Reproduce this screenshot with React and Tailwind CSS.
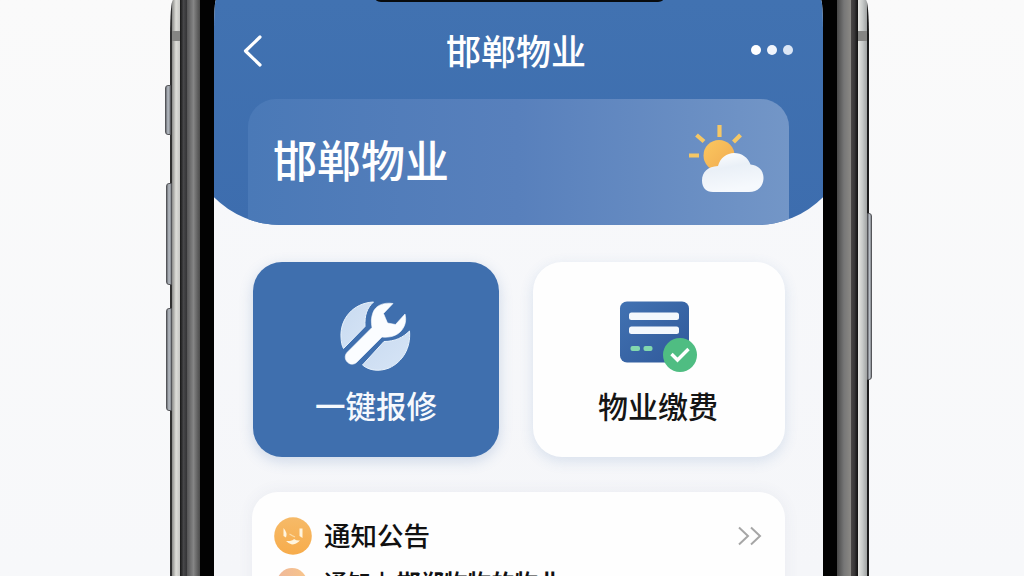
const cjk = "font-['Noto_Sans_CJK_SC','Noto_Sans',sans-serif]";

function WeatherIcon() {
  return (
    <svg className="-mr-px mt-[25px] h-[72px] w-[80px] shrink-0" viewBox="0 0 80 72">
      <defs>
        <linearGradient id="sun" x1="0" y1="0" x2="1" y2="1">
          <stop offset="0" stopColor="#fbc75f" />
          <stop offset="1" stopColor="#f0aa50" />
        </linearGradient>
        <linearGradient id="cloud" x1="0" y1="0" x2="0.3" y2="1">
          <stop offset="0" stopColor="#ffffff" />
          <stop offset="0.45" stopColor="#eaf0f7" />
          <stop offset="1" stopColor="#f6f9fd" />
        </linearGradient>
      </defs>
      <g stroke="#f5c765" strokeWidth="4.2">
        <path d="M34.500 1V13M4 31.500H14M11.500 11L19 17.500M55.500 11L48.500 18" />
      </g>
      <circle cx="34" cy="31.500" r="15.500" fill="url(#sun)" />
      <path
        d="M28 68C21 68 17 63.500 17 56.500C17 48 23 42.500 33 42C35 34 42 29 49 29C57 29 63 33.500 65.500 40.500C73 41 78.500 46 78.500 54C78.500 62 73 68 64 68Z"
        fill="url(#cloud)"
      />
    </svg>
  );
}

function RepairIcon() {
  return (
    <svg className="h-[74px] w-[74px]" viewBox="0 0 74 74">
      <defs>
        <linearGradient id="disc" x1="0" y1="0" x2="1" y2="1">
          <stop offset="0" stopColor="#c8daf0" />
          <stop offset="1" stopColor="#d7e5f6" />
        </linearGradient>
      </defs>
      <g fill="url(#disc)" stroke="#e8f2fc" strokeWidth="1">
        <path d="M34.500 3C14 4 1 20 2 38C2.200 43 3 47 4.500 49.500L26 27.500C25.500 16 28 9 34.500 3Z" />
        <path d="M70.500 32C64 38.500 56 42.500 45 42.500L23.500 66C30 71.500 40 73 50 69C63.500 63 72 49 70.500 32Z" />
      </g>
      <path
        d="M54 4.500C44.500 3 36.500 6.500 34 13.500C32 19 32 23 33 28.500L8 53.500C2.500 60 11 69 17.500 63.500L43 38C51 39 58.500 36.500 62.500 31.500C66.500 26.500 67.500 21 66 15L56.500 25.500L48.500 24L44.500 14.500Z"
        fill="#fbfdff"
        stroke="#fbfdff"
        strokeWidth="0.6"
        strokeLinejoin="round"
      />
    </svg>
  );
}

function PaymentIcon() {
  return (
    <svg className="h-[74px] w-[80px]" viewBox="0 0 80 74">
      <defs>
        <linearGradient id="bill" x1="0" y1="0" x2="1" y2="1">
          <stop offset="0" stopColor="#4172b2" />
          <stop offset="1" stopColor="#30599a" />
        </linearGradient>
      </defs>
      <rect x="1" y="2.500" width="69" height="61" rx="7" fill="url(#bill)" />
      <rect x="10" y="13.500" width="50" height="7.500" rx="2.500" fill="#f3f8fd" />
      <rect x="10" y="27.500" width="50" height="7.500" rx="2.500" fill="#f3f8fd" />
      <rect x="11.500" y="47" width="9.500" height="5" rx="2" fill="#82d8ae" />
      <rect x="24.500" y="47" width="9" height="5" rx="2" fill="#82d8ae" />
      <circle cx="61" cy="56" r="17" fill="#4fbd82" />
      <path d="M52.500 55L58.500 61L69.500 50" fill="none" stroke="#fff" strokeWidth="3.400" />
    </svg>
  );
}

function FaceIcon() {
  return (
    <svg className="h-[38px] w-[38px] shrink-0" viewBox="0 0 38 38">
      <defs>
        <linearGradient id="face" x1="0" y1="0" x2="0" y2="1">
          <stop offset="0" stopColor="#f6ba68" />
          <stop offset="1" stopColor="#f7ac4b" />
        </linearGradient>
      </defs>
      <circle cx="19" cy="19" r="18.800" fill="url(#face)" />
      <path d="M9.500 11Q14 16 12 20.500L9.500 19ZM25.500 11.500H28.500V21L25.500 19ZM12 24Q18 24.500 20 22Q23 24 26 23.500Q22 27.500 18 27.500Q15 27 12 24Z" fill="#fff5df" />
      <path d="M15.500 17L18 18.500L21 20" fill="none" stroke="#fbdca8" strokeWidth="1.200" />
    </svg>
  );
}

function LeftRail() {
  return (
    <div className="flex h-full w-[44px] shrink-0">
      <div className="w-[2px] bg-[#303030]" />
      <div className="flex w-[8px] flex-col bg-linear-to-r from-[#8b8b89] via-[#deded9] to-[#c5c5c2]">
        <div className="mt-[31px] h-[10px] bg-[#858583]" />
      </div>
      <div className="w-[7px] bg-linear-to-r from-[#171717] via-[#474749] to-[#343436]" />
      <div className="w-[13px] bg-linear-to-r from-[#555556] via-[#858585] to-[#4b4b4b]" />
      <div className="w-[14px] bg-[#020202]" />
    </div>
  );
}

function RightRail() {
  return (
    <div className="flex h-full w-[46px] shrink-0">
      <div className="w-[14px] bg-[#020202]" />
      <div className="w-[14px] bg-linear-to-r from-[#484848] via-[#777777] to-[#8b8985]" />
      <div className="w-[7px] bg-linear-to-r from-[#4a4746] via-[#373536] to-[#101010]" />
      <div className="flex w-[9px] flex-col bg-linear-to-r from-[#e6e6e2] via-[#c7cac9] to-[#a0a3a3]">
        <div className="mt-[31px] h-[10px] bg-[#858583]" />
      </div>
      <div className="w-[2px] bg-[#1c1c1c]" />
    </div>
  );
}

function Header() {
  return (
    <header className="-mx-[28px] flex h-[225px] shrink-0 flex-col overflow-hidden rounded-b-[95px] bg-linear-to-b from-[#4172b1] to-[#3d6dae] px-[62px]">
      <div className="flex h-[99px] shrink-0 items-center justify-between pt-[2px]">
        <div className="flex w-[60px]">
          <svg className="-ml-[6px] h-[34px] w-[22px]" viewBox="0 0 22 34">
            <path d="M18 3L3.500 17L18 31" fill="none" stroke="#fff" strokeWidth="3.200" strokeLinecap="round" strokeLinejoin="round" />
          </svg>
        </div>
        <h1 className="-ml-[9px] -mt-[2px] text-[35px] leading-[44px] font-medium text-white">邯郸物业</h1>
        <div className="-mr-[4px] flex w-[60px] justify-end gap-[6px] pb-px">
          <span className="h-[10px] w-[10px] rounded-full bg-white" />
          <span className="h-[10px] w-[10px] rounded-full bg-[#f1f5fc]" />
          <span className="h-[10px] w-[10px] rounded-full bg-[#dbe6f5]" />
        </div>
      </div>
      <section className="flex grow justify-between rounded-t-[28px] bg-linear-to-r from-[#4a79b7] via-[#5880bc] to-[#7396c7] pr-[25px] pl-[25px]">
        <h2 className="mt-[32px] text-[44px] leading-[56px] font-medium text-white">邯郸物业</h2>
        <WeatherIcon />
      </section>
    </header>
  );
}

function Notices() {
  return (
    <section className="mt-[35px] mr-[38px] ml-[38px] flex h-[160px] shrink-0 flex-col rounded-[26px] bg-[#fefefe] px-[22px] pt-[24px] shadow-[0_0_16px_rgba(70,90,130,0.07)]">
      <div className="flex h-[39px] shrink-0 items-center">
        <FaceIcon />
        <h3 className="-mt-px ml-[12px] grow text-[26.500px] leading-[38px] font-medium text-[#111]">通知公告</h3>
        <svg className="mt-[1px] h-[20px] w-[26px]" viewBox="0 0 26 20">
          <path d="M2 1.500L11 10L2 18.500M14 1.500L23 10L14 18.500" fill="none" stroke="#a6a6a6" strokeWidth="2" />
        </svg>
      </div>
      <div className="mt-[13px] flex">
        <span className="ml-[3px] h-[30px] w-[30px] shrink-0 rounded-full bg-linear-to-r from-[#efb89a] to-[#f8c58a]" />
        <p className="mt-px ml-[17px] flex text-[23.500px] leading-[26px] whitespace-nowrap text-[#111]">
          <span className="w-[73px] font-medium">通知上</span>
          <span className="font-bold">邯郸物物的物业</span>
        </p>
      </div>
    </section>
  );
}

const sideButton = "absolute border border-[#55565a] bg-linear-to-r from-[#6d7075] via-[#b9bfc7] to-[#85898e]";

export default function App() {
  return (
    <main className={`flex h-[576px] w-[1024px] overflow-hidden bg-linear-to-b from-[#fafafa] to-[#f7f8fa] pl-[170px] ${cjk}`}>
      <div className="relative flex h-full w-[699px]">
        <div className={`${sideButton} top-[85px] -left-[5px] h-[50px] w-[6px] rounded-l-[3px]`} />
        <div className={`${sideButton} top-[183px] -left-[4px] h-[102px] w-[6px] rounded-l-[3px]`} />
        <div className={`${sideButton} top-[308px] -left-[4px] h-[103px] w-[6px] rounded-l-[3px]`} />
        <div className={`${sideButton} top-[213px] -right-[3px] h-[167px] w-[5px] rounded-r-[3px]`} />
        <div className="flex h-full w-[699px] overflow-hidden rounded-t-[3px_36px]">
          <LeftRail />
          <div className="flex h-full w-[609px] shrink-0 bg-black">
            <div className="flex h-full w-full flex-col overflow-hidden rounded-t-[2px_30px] bg-linear-to-b from-[#f8f9fb] to-[#f5f6f9]">
              <Header />
              <div className="mt-[37px] flex shrink-0 gap-[34px] pl-[39px]">
                <button className="flex h-[195px] w-[246px] flex-col items-center rounded-[29px] bg-[#3f6fae] pt-[37px] shadow-[0_4px_14px_rgba(63,111,174,0.22)]">
                  <RepairIcon />
                  <span className="mt-[12px] text-[30.500px] leading-[40px] font-medium text-[#f6f9fd]">一键报修</span>
                </button>
                <button className="flex h-[195px] w-[252px] flex-col items-center rounded-[29px] bg-[#fefefe] pt-[37px] shadow-[0_4px_14px_rgba(63,111,174,0.16)]">
                  <PaymentIcon />
                  <span className="mt-[12px] -ml-[2px] text-[30px] leading-[40px] font-medium text-[#151515]">物业缴费</span>
                </button>
              </div>
              <Notices />
            </div>
          </div>
          <RightRail />
        </div>
        <div className="absolute top-0 left-[206px] h-[2px] w-[287px] rounded-b-[8px_2px] bg-[#080b0e]" />
      </div>
    </main>
  );
}
